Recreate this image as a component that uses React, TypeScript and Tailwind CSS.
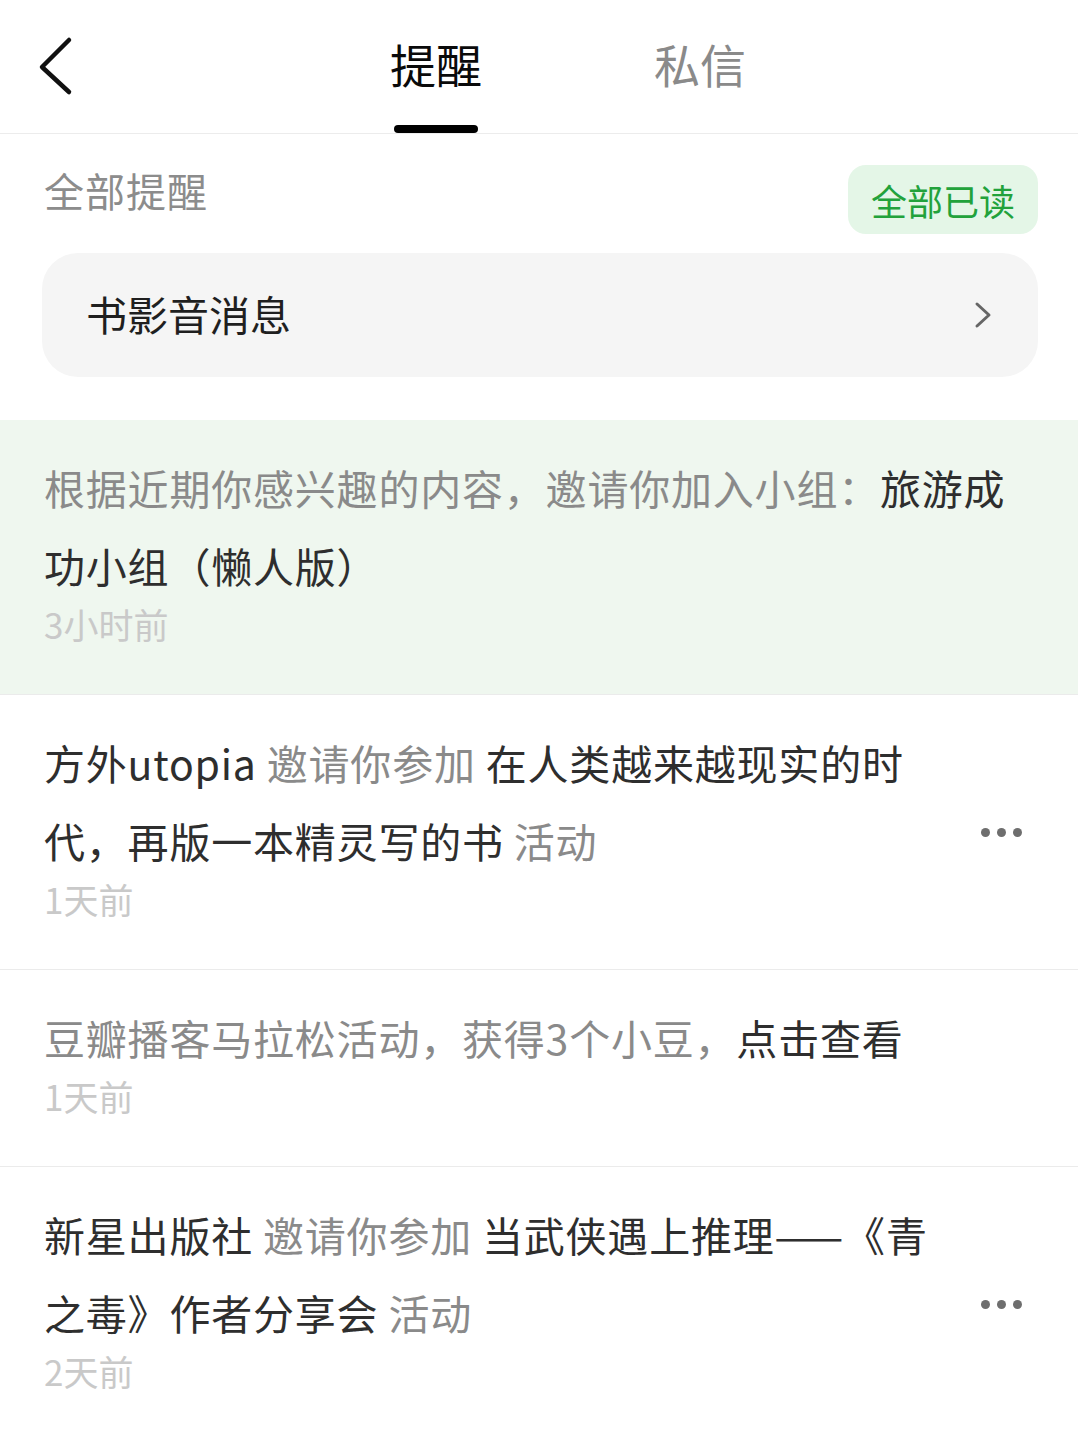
import { Fragment } from 'react'

type Seg = { text: string; dark?: boolean }

const NOTICES: { id: number; segs: Seg[]; time: string; unread?: boolean; more?: boolean }[] = [
  {
    id: 1,
    unread: true,
    segs: [
      { text: '根据近期你感兴趣的内容，邀请你加入小组：' },
      { text: '旅游成功小组（懒人版）', dark: true },
    ],
    time: '3小时前',
  },
  {
    id: 2,
    more: true,
    segs: [
      { text: '方外utopia', dark: true },
      { text: ' 邀请你参加 ' },
      { text: '在人类越来越现实的时代，再版一本精灵写的书', dark: true },
      { text: ' 活动' },
    ],
    time: '1天前',
  },
  {
    id: 3,
    segs: [
      { text: '豆瓣播客马拉松活动，获得3个小豆，' },
      { text: '点击查看', dark: true },
    ],
    time: '1天前',
  },
  {
    id: 4,
    more: true,
    segs: [
      { text: '新星出版社', dark: true },
      { text: ' 邀请你参加 ' },
      { text: '当武侠遇上推理——《青之毒》作者分享会', dark: true },
      { text: ' 活动' },
    ],
    time: '2天前',
  },
]

function MoreDots() {
  return (
    <span className="flex items-center gap-[7px]">
      <span className="h-[9px] w-[9px] rounded-full bg-[#6e6e6e]" />
      <span className="h-[9px] w-[9px] rounded-full bg-[#6e6e6e]" />
      <span className="h-[9px] w-[9px] rounded-full bg-[#6e6e6e]" />
    </span>
  )
}

export default function App() {
  return (
    <div className="min-h-[1437px] bg-white font-[family-name:'Noto_Sans_CJK_SC',sans-serif] text-[#2b2b2b]">
      <header className="flex h-[134px] border-b border-[#ececec]">
        <button type="button" aria-label="返回" className="flex w-[110px] items-center pl-[38px] pb-[2px]">
          <svg width="36" height="60" viewBox="0 0 36 60" fill="none">
            <path d="M31 4 L4 31 L31 56" stroke="#111" strokeWidth="4.5" strokeLinecap="round" strokeLinejoin="round" />
          </svg>
        </button>

        <nav className="ml-[280px] flex gap-[172px]">
          <div className="flex flex-col items-center">
            <span className="flex flex-1 items-center text-[46px] leading-none text-[#0a0a0a]">提醒</span>
            <span className="h-[8px] w-[84px] rounded-full bg-black" />
          </div>
          <div className="flex flex-col items-center">
            <span className="flex flex-1 items-center text-[46px] leading-none text-[#8a8a8a]">私信</span>
            <span className="h-[8px] w-[84px]" />
          </div>
        </nav>
      </header>

      <div className="mt-[31px] flex items-center justify-between pl-[44px] pr-[40px]">
        <h2 className="mb-[20px] text-[40px] leading-none tracking-[1px] text-[#8c8c8c]">全部提醒</h2>
        <button type="button" className="flex h-[69px] items-center rounded-[18px] bg-[#e4f6e7] px-[23px] text-[36px] text-[#22a23b]">
          全部已读
        </button>
      </div>

      <div className="ml-[42px] mr-[40px] mt-[19px] flex h-[124px] items-center justify-between rounded-[36px] bg-[#f5f5f5] pl-[44px] pr-[46px]">
        <span className="mb-[3px] text-[41px] text-[#1f1f1f]">书影音消息</span>
        <svg width="18" height="28" viewBox="0 0 18 28" fill="none">
          <path d="M3 3 L15 14 L3 25" stroke="#666" strokeWidth="3" strokeLinecap="round" strokeLinejoin="round" />
        </svg>
      </div>

      <ul className="mt-[43px]">
        {NOTICES.map((n) => (
          <li
            key={n.id}
            className={`flex border-b border-[#ebebeb] pl-[44px] ${
              n.unread ? 'bg-[#eff7ef] pr-[44px]' : 'pr-[56px]'
            }`}
          >
            <div className="min-w-0 flex-1 pb-[50px] pt-[28px]">
              <p className="text-[41px] leading-[78px] tracking-[0.8px]">
                {n.segs.map((s, i) => (
                  <Fragment key={i}>
                    <span className={s.dark ? 'text-[#2e2e2e]' : 'text-[#8a8a8a]'}>{s.text}</span>
                  </Fragment>
                ))}
              </p>
              <p className="text-[35px] leading-[40px] text-[#c9c9c9]">{n.time}</p>
            </div>
            {n.more && (
              <div className="ml-[20px] flex w-[42px] items-center justify-center">
                <MoreDots />
              </div>
            )}
          </li>
        ))}
      </ul>
    </div>
  )
}
